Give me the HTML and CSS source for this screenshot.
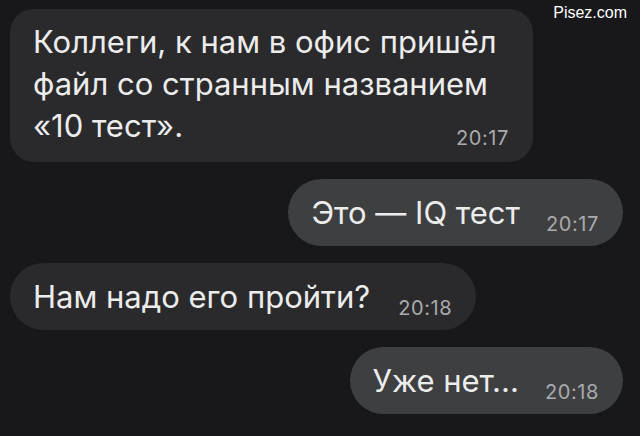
FILE: index.html
```html
<!DOCTYPE html>
<html lang="ru">
<head>
<meta charset="utf-8">
<link rel="stylesheet" href="styles.css">
</head>
<body>
<div class="watermark">Pisez.com</div>
<main class="chat">
  <div class="bubble in multi">
    <p class="text">Коллеги, к нам в офис пришёл<br>файл со странным названием<br>«10 тест».</p>
    <span class="time">20:17</span>
  </div>
  <div class="bubble out"><span class="text">Это — IQ тест</span><span class="time">20:17</span></div>
  <div class="bubble in"><span class="text">Нам надо его пройти?</span><span class="time">20:18</span></div>
  <div class="bubble out last"><span class="text">Уже нет...</span><span class="time">20:18</span></div>
</main>
</body>
</html>
```
FILE: styles.css
```css
html, body {
  margin: 0;
  padding: 0;
  background: #18181a;
  width: 640px;
  height: 436px;
  overflow: hidden;
}
body {
  font-family: Inter, "Liberation Sans", Arial, sans-serif;
  color: #ececec;
  position: relative;
}
.watermark {
  position: absolute;
  top: 4px;
  right: 13px;
  font-family: "Liberation Sans", Arial, sans-serif;
  font-size: 16px;
  color: #ffffff;
}
.chat {
  display: flex;
  flex-direction: column;
  align-items: flex-start;
  gap: 17px;
  padding: 9px 17px 0 10px;
}
.bubble {
  background: #2a2a2c;
  border-radius: 34px;
  height: 67px;
  box-sizing: border-box;
  display: flex;
  align-items: baseline;
  padding: 0 24px 0 23px;
  font-size: 31px;
  line-height: 67px;
}
.bubble.out {
  align-self: flex-end;
  background: #3e3f41;
}
.bubble.out .time {
  margin-left: 26px;
}
.bubble.multi {
  display: flex;
  flex-direction: column;
  align-items: stretch;
  width: 523px;
  height: 153px;
  border-radius: 24px;
  padding: 12px 24px 0 23px;
  line-height: 42px;
}
.text {
  margin: 0;
}
.time {
  font-size: 20px;
  letter-spacing: 0.6px;
  color: #a9aaac;
  margin-left: 28px;
  position: relative;
  top: 7px;
}
.multi .time {
  align-self: flex-end;
  margin-top: -30px;
  top: 0;
}
```
